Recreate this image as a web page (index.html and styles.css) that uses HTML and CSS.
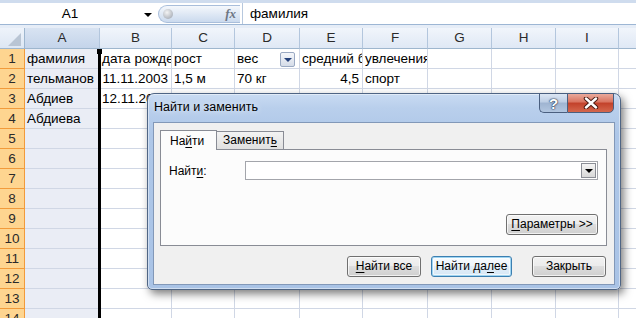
FILE: index.html
```html
<!DOCTYPE html>
<html lang="ru">
<head>
<meta charset="utf-8">
<title>Найти и заменить</title>
<link rel="stylesheet" href="styles.css">
</head>
<body>
<div class="app">
  <div class="fbar">
    <div class="namebox">A1</div>
    <div class="nbarrow"><span class="tri"></span></div>
    <div class="capsule"><span class="knob"></span><span class="fx">fx</span></div>
    <div class="formula">фамилия</div>
  </div>

  <div class="sheet">
    <div class="rowhdr">
      <div class="corner"><span class="ctri"></span></div>
      <div class="nums">
        <div class="n">1</div><div class="n">2</div><div class="n">3</div><div class="n">4</div>
        <div class="n">5</div><div class="n">6</div><div class="n">7</div><div class="n">8</div>
        <div class="n">9</div><div class="n">10</div><div class="n">11</div><div class="n">12</div>
        <div class="n">13</div><div class="n">14</div>
      </div>
    </div>
    <div class="col a">
      <div class="h">A</div>
      <div class="body">
        <div class="cell">фамилия</div>
        <div class="cell">тельманов</div>
        <div class="cell">Абдиев</div>
        <div class="cell">Абдиева</div>
      </div>
    </div>
    <div class="col b">
      <div class="h">B</div>
      <div class="body">
        <div class="cell">дата рождения</div>
        <div class="cell r">11.11.2003</div>
        <div class="cell r">12.11.2003</div>
      </div>
    </div>
    <div class="col c">
      <div class="h">C</div>
      <div class="body">
        <div class="cell">рост</div>
        <div class="cell">1,5 м</div>
      </div>
    </div>
    <div class="col d">
      <div class="h">D</div>
      <div class="body">
        <div class="cell filt"><span>вес</span><span class="fbtn"><span class="ftri"></span></span></div>
        <div class="cell">70 кг</div>
      </div>
    </div>
    <div class="col e">
      <div class="h">E</div>
      <div class="body">
        <div class="cell">средний балл</div>
        <div class="cell r">4,5</div>
      </div>
    </div>
    <div class="col f">
      <div class="h">F</div>
      <div class="body">
        <div class="cell">увлечения</div>
        <div class="cell">спорт</div>
      </div>
    </div>
    <div class="col g"><div class="h">G</div><div class="body"></div></div>
    <div class="col hh"><div class="h">H</div><div class="body"></div></div>
    <div class="col i"><div class="h">I</div><div class="body"></div></div>
    <div class="col j"><div class="h"></div><div class="body"></div></div>
  </div>

  <div class="dialog">
    <div class="title">Найти и заменить</div>
    <div class="tbtns">
      <div class="help">?</div>
      <div class="close">
        <svg width="16" height="12" viewBox="0 0 16 12"><path d="M3 1.5 L13 10.5 M13 1.5 L3 10.5" stroke="#4a1a12" stroke-width="4.4" stroke-linecap="round"/><path d="M3 1.5 L13 10.5 M13 1.5 L3 10.5" stroke="#fff" stroke-width="2.4" stroke-linecap="round"/></svg>
      </div>
    </div>
    <div class="client">
      <div class="tabs">
        <div class="tab active">На<u>й</u>ти</div>
        <div class="tab">Заменит<u>ь</u></div>
      </div>
      <div class="panel">
        <div class="findrow">
          <label class="lbl">Найт<u>и</u>:</label>
          <div class="combo"><span class="cbtn"><span class="tri"></span></span></div>
        </div>
        <div class="prow">
          <div class="btn params"><u>П</u>араметры &gt;&gt;</div>
        </div>
      </div>
      <div class="btnrow">
        <div class="btn w74"><u>Н</u>айти все</div>
        <div class="btn def">Найти да<u>л</u>ее</div>
        <div class="btn w74 gap">Закрыть</div>
      </div>
    </div>
  </div>
</div>
</body>
</html>
```

FILE: styles.css
```css
* { box-sizing: border-box; }
html, body { margin: 0; padding: 0; }
body {
  width: 636px;
  height: 318px;
  overflow: hidden;
  background: #fff;
  font-family: "Liberation Sans", Arial, sans-serif;
  color: #000;
}
.app { position: relative; width: 636px; height: 318px; overflow: hidden; }

/* formula bar */
.fbar {
  height: 28px;
  display: flex;
  background: linear-gradient(to bottom, #cfdcee 0, #cfdcee 3px, #fff 3px, #fff 24px, #9db6d4 24px, #9db6d4 25px, #e6edf7 25px);
}
.namebox {
  width: 140px;
  height: 21px;
  margin-top: 3px;
  text-align: center;
  font-size: 13.5px;
  line-height: 21px;
}
.nbarrow {
  width: 16px;
  height: 21px;
  margin-top: 3px;
  display: flex;
  align-items: center;
  justify-content: center;
}
.nbarrow .tri {
  width: 0; height: 0;
  border-left: 4px solid transparent;
  border-right: 4px solid transparent;
  border-top: 4px solid #000;
  margin-top: 2px;
}
.capsule {
  margin-top: 5px;
  margin-left: 2px;
  width: 82px;
  height: 18px;
  border: 1px solid #a9bedb;
  border-right: none;
  border-radius: 9px 0 0 9px;
  background: linear-gradient(to bottom, #f5f8fc, #dde7f4 55%, #cbdaee);
  display: flex;
  align-items: center;
  justify-content: space-between;
  padding: 0 4px 0 4px;
}
.knob {
  width: 10px; height: 10px;
  border-radius: 50%;
  background: radial-gradient(circle at 40% 35%, #f4f4f4, #a9afb8 80%);
}
.fx {
  font-family: "Liberation Serif", serif;
  font-style: italic;
  font-weight: bold;
  font-size: 13px;
  color: #6d7684;
}
.formula {
  margin-top: 3px;
  height: 21px;
  border-left: 1px solid #b7c8de;
  margin-left: 2px;
  padding-left: 7px;
  font-size: 13.5px;
  line-height: 21px;
}

/* sheet */
.sheet { display: flex; height: 290px; }
.rowhdr { width: 25px; flex: none; }
.corner {
  height: 21px;
  border-right: 1px solid #9eb6ce;
  border-bottom: 1px solid #9eb6ce;
  background: linear-gradient(to bottom, #eef3fa, #dde7f4);
  position: relative;
}
.ctri {
  position: absolute;
  right: 3px; bottom: 2px;
  width: 0; height: 0;
  border-left: 13px solid transparent;
  border-bottom: 13px solid #b9c5d4;
}
.nums {
  background: #fed590;
  border-right: 1px solid #f29b3b;
}
.n {
  height: 20px;
  border-bottom: 1px solid #f29b3b;
  text-align: center;
  font-size: 13.5px;
  line-height: 19px;
  color: #2a2a2a;
}

.col { flex: none; }
.col .h {
  height: 21px;
  border-right: 1px solid #b3c6dd;
  border-bottom: 1px solid #9eb6ce;
  background: linear-gradient(to bottom, #f1f5fb, #dfe8f5);
  text-align: center;
  font-size: 13.5px;
  line-height: 20px;
  color: #2a2a2a;
}
.col .body {
  height: 269px;
  border-right: 1px solid #d0d7e5;
  background: repeating-linear-gradient(to bottom, transparent 0, transparent 19px, #d0d7e5 19px, #d0d7e5 20px);
}
.col.a .h { background: linear-gradient(to bottom, #d8e3f2, #c4d4ea); }
.col.a .body {
  position: relative;
  background-color: #eaedf5;
}
.col.a .body::after {
  content: "";
  position: absolute;
  top: 0; bottom: 0;
  right: -2px;
  width: 3px;
  background: #000;
  z-index: 2;
}
.col.a .body::before {
  content: "";
  position: absolute;
  top: 0;
  right: -3px;
  width: 5px;
  height: 5px;
  background: #000;
  z-index: 3;
}
.a { width: 75px; }
.b { width: 72px; }
.c { width: 63px; }
.d { width: 65px; }
.e { width: 63px; }
.f { width: 65px; }
.g { width: 64px; }
.hh { width: 64px; }
.i { width: 63px; }
.j { width: 40px; }

.cell {
  height: 20px;
  padding: 0 2px;
  font-size: 13.5px;
  line-height: 19px;
  white-space: nowrap;
  overflow: hidden;
}
.cell.r { text-align: right; padding-right: 3px; }
.cell.filt { display: flex; justify-content: space-between; align-items: flex-start; }
.fbtn {
  margin-top: 3px;
  margin-right: 2px;
  width: 15px; height: 15px;
  border: 1px solid #9aa9c2;
  border-radius: 2px;
  background: linear-gradient(to bottom, #f4f6fa, #d5dce8);
  display: flex;
  align-items: center;
  justify-content: center;
}
.ftri {
  width: 0; height: 0;
  border-left: 4px solid transparent;
  border-right: 4px solid transparent;
  border-top: 4px solid #24407a;
}

/* dialog */
.dialog {
  position: absolute;
  left: 147px;
  top: 93px;
  width: 474px;
  height: 197px;
  border: 1px solid #4f6584;
  border-radius: 7px 7px 5px 5px;
  background: linear-gradient(to bottom, #c9dbf2 0, #b9cfec 14px, #aec7e8 40px, #a9c3e6 100%);
  box-shadow: 3px 4px 9px rgba(0,0,0,.5), inset 0 0 0 1px rgba(255,255,255,.45);
  padding: 0 5px 4px 5px;
  display: flex;
  flex-direction: column;
  font-family: "Liberation Sans", Arial, sans-serif;
  font-size: 12px;
  z-index: 10;
}
.title {
  height: 28px;
  line-height: 27px;
  padding-left: 1px;
  font-size: 12.5px;
  color: #000;
  text-shadow: 0 0 6px rgba(255,255,255,.9);
}
.tbtns {
  position: absolute;
  top: -1px;
  right: 6px;
  display: flex;
}
.help, .close {
  height: 20px;
  border: 1px solid #4a5f7f;
  display: flex;
  align-items: center;
  justify-content: center;
}
.help {
  width: 28px;
  border-right: none;
  border-radius: 0 0 0 5px;
  background: linear-gradient(to bottom, #dce6f3 0, #bccde4 45%, #9fb4d1 50%, #b2c6e0 100%);
  color: #fff;
  font-weight: bold;
  font-size: 15px;
  text-shadow: 0 0 1px #2b3b55, 0 0 1px #2b3b55, 0 0 2px #2b3b55;
}
.close {
  width: 47px;
  border-radius: 0 0 5px 0;
  background: linear-gradient(to bottom, #e9a99b 0, #d9735f 45%, #c2412a 50%, #d4674d 100%);
}
.client {
  flex: 1;
  background: #f0f0f0;
  border: 1px solid #8298b8;
  padding: 7px 7px 0 6px;
  display: flex;
  flex-direction: column;
}
.tabs {
  display: flex;
  align-items: flex-end;
  height: 19px;
  position: relative;
  z-index: 2;
}
.tab {
  height: 18px;
  border: 1px solid #898c95;
  border-bottom: none;
  padding: 0 6px;
  line-height: 17px;
  font-size: 12px;
  background: linear-gradient(to bottom, #f3f3f3, #e0e0e0);
  margin-left: -1px;
}
.tab.active {
  height: 20px;
  margin-left: 0;
  margin-bottom: -1px;
  width: 57px;
  padding-left: 9px;
  line-height: 21px;
  background: #fcfcfc;
}
.tab u, .lbl u, .btn u { text-decoration: underline; text-underline-offset: 2px; }
.panel {
  width: 447px;
  height: 97px;
  border: 1px solid #898c95;
  background: #fcfcfc;
  padding: 11px 8px 10px 8px;
  display: flex;
  flex-direction: column;
  justify-content: space-between;
}
.findrow { display: flex; align-items: center; }
.lbl { width: 76px; font-size: 12px; }
.combo {
  width: 353px;
  height: 19px;
  border: 1px solid #a3a5ab;
  background: #fff;
  display: flex;
  justify-content: flex-end;
  align-items: stretch;
  padding: 1px;
}
.cbtn {
  width: 15px;
  border: 1px solid #8b8e96;
  background: linear-gradient(to bottom, #f4f4f4, #d8d8d8);
  display: flex;
  align-items: center;
  justify-content: center;
}
.cbtn .tri {
  width: 0; height: 0;
  border-left: 4px solid transparent;
  border-right: 4px solid transparent;
  border-top: 4px solid #000;
}
.prow { display: flex; justify-content: flex-end; }
.btn {
  height: 21px;
  border: 1px solid #707070;
  border-radius: 3px;
  background: linear-gradient(to bottom, #f2f2f2 0, #ebebeb 50%, #dddddd 50%, #cfcfcf 100%);
  box-shadow: inset 0 0 0 1px rgba(255,255,255,.7);
  font-size: 12px;
  line-height: 19px;
  text-align: center;
  white-space: nowrap;
}
.params { width: 92px; }
.btnrow {
  display: flex;
  justify-content: flex-end;
  margin-top: 10px;
  padding-right: 1px;
  gap: 10px;
}
.w74 { width: 74px; }
.btn.def {
  width: 81px;
  border-color: #3c7fb1;
  background: linear-gradient(to bottom, #f8fbfe 0, #eef5fb 50%, #e1edf8 50%, #d6e8f6 100%);
  box-shadow: inset 0 0 0 1px #9fd5f2, inset 0 0 0 2px rgba(255,255,255,.6);
}
.btn.gap { margin-left: 10px; }
```
